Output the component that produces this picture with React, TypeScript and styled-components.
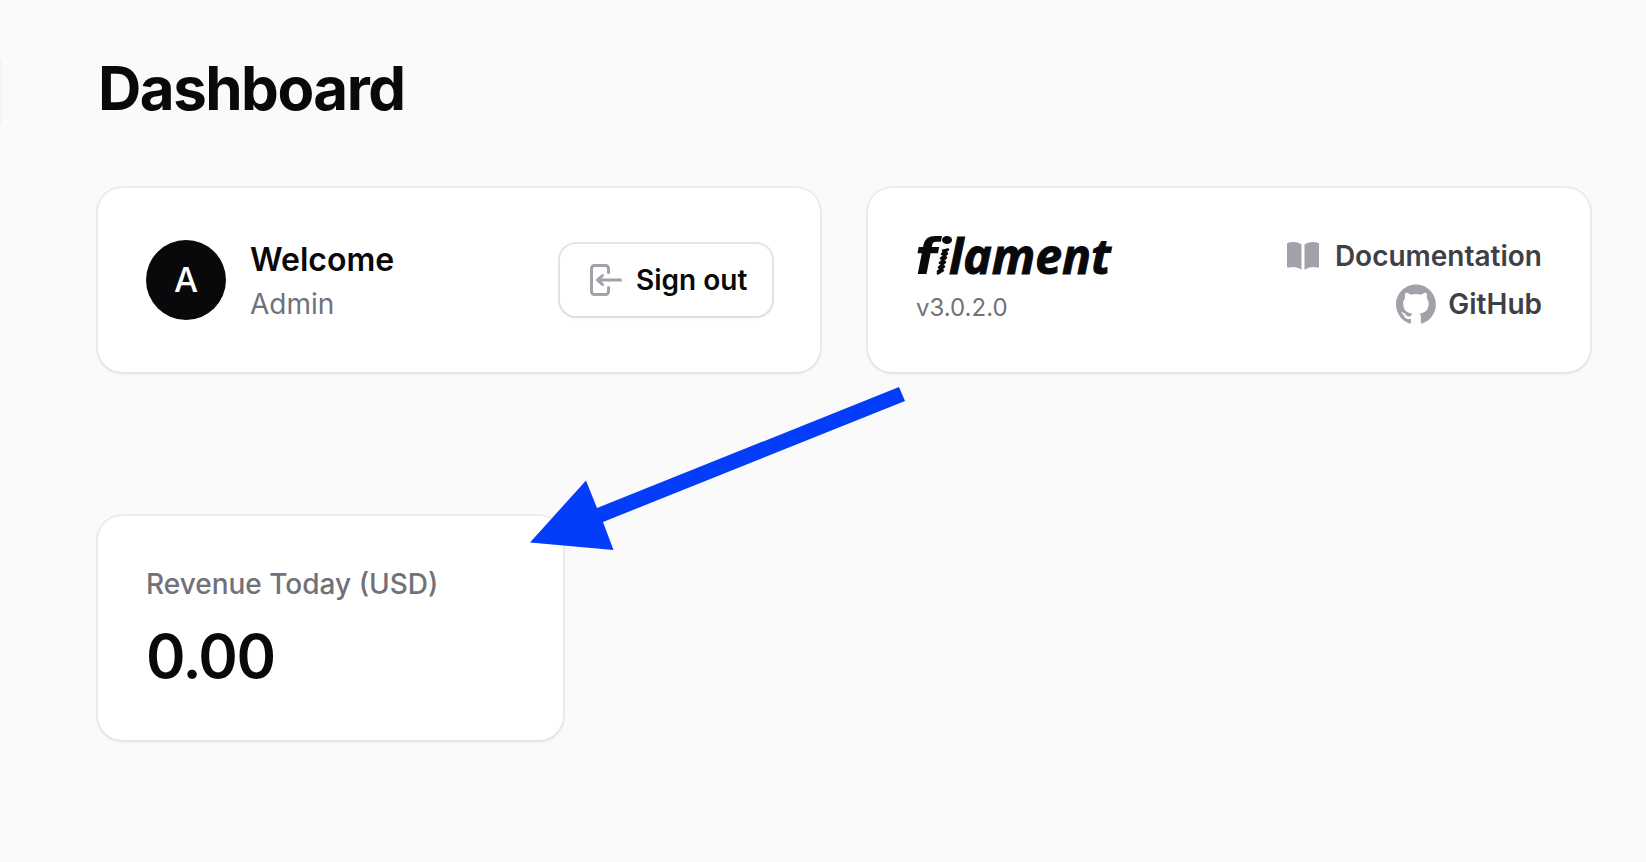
import React from "react";
import styled, { createGlobalStyle } from "styled-components";
import { HiMiniBookOpen } from "react-icons/hi2";

const GlobalStyle = createGlobalStyle`
  *, *::before, *::after { box-sizing: border-box; }
  body {
    margin: 0;
    background: #fafafa;
    color: #09090b;
    font-family: Inter, "Liberation Sans", sans-serif;
    -webkit-font-smoothing: antialiased;
  }
  h1, h2, p { margin: 0; }
`;

const Layout = styled.div`
  display: flex;
  align-items: flex-start;
  min-height: 100vh;
`;

const SidebarEdge = styled.aside`
  flex: none;
  width: 2px;
  height: 64px;
  margin-top: 60px;
  border-radius: 0 2px 2px 0;
  background: #f4f4f5;
`;

const Main = styled.main`
  flex: 1;
  min-width: 0;
  padding: 52px 56px 120px 96px;
`;

const Title = styled.h1`
  font-size: 60px;
  line-height: 72px;
  font-weight: 700;
  letter-spacing: -0.025em;
`;

const WidgetGrid = styled.div<{ $columns: number; $top: number }>`
  display: grid;
  grid-template-columns: repeat(${(p) => p.$columns}, minmax(0, 1fr));
  gap: 48px;
  margin-top: ${(p) => p.$top}px;
`;

const Card = styled.section`
  display: flex;
  align-items: center;
  padding: 48px;
  border-radius: 24px;
  background: #fff;
  box-shadow: 0 0 0 2px rgba(9, 9, 11, 0.05), 0 2px 4px rgba(0, 0, 0, 0.05);
`;

const Avatar = styled.div`
  display: grid;
  place-items: center;
  flex: none;
  width: 80px;
  height: 80px;
  margin-right: 24px;
  border-radius: 50%;
  background: #09090b;
  color: #fff;
  font-size: 34px;
  font-weight: 500;
  line-height: 40px;
`;

const Grow = styled.div`
  flex: 1;
  min-width: 0;
`;

const Greeting = styled.h2`
  font-size: 32px;
  line-height: 48px;
  font-weight: 600;
`;

const UserName = styled.p`
  font-size: 28px;
  line-height: 40px;
  color: #71717a;
`;

const SignOutButton = styled.button`
  display: inline-flex;
  align-items: center;
  gap: 12px;
  min-width: 212px;
  padding: 16px 24px;
  border: 0;
  border-radius: 16px;
  background: #fff;
  color: #09090b;
  font: 600 28px/40px Inter, "Liberation Sans", sans-serif;
  box-shadow: 0 0 0 2px rgba(9, 9, 11, 0.1), 0 2px 4px rgba(0, 0, 0, 0.05);
  cursor: pointer;

  svg { flex: none; color: #a1a1aa; }
`;

const BrandLink = styled.a`
  display: block;
  height: 40px;
  color: inherit;

  svg { display: block; overflow: visible; }
`;

const Version = styled.p`
  margin-top: 16px;
  font-size: 24px;
  line-height: 32px;
  color: #71717a;
`;

const Links = styled.nav`
  display: flex;
  flex-direction: column;
  align-items: flex-end;
  gap: 8px;
`;

const ResourceLink = styled.a`
  display: inline-flex;
  align-items: center;
  gap: 12px;
  color: #3f3f46;
  font-size: 28px;
  line-height: 40px;
  font-weight: 600;
  text-decoration: none;

  svg { color: #a1a1aa; }
`;

const Stat = styled.div`
  display: grid;
  gap: 16px;
`;

const StatLabel = styled.p`
  font-size: 28px;
  line-height: 40px;
  font-weight: 500;
  color: #71717a;
`;

const StatValue = styled.p`
  font-size: 60px;
  line-height: 72px;
  font-weight: 600;
  letter-spacing: -0.025em;
`;

const Arrow = styled.svg`
  position: absolute;
  left: 530px;
  top: 387px;
  pointer-events: none;
`;

const FilamentLogo = () => (
  <svg width="200" height="40" viewBox="0 0 200 40" fill="currentColor" role="img" aria-label="filament">
    <g fontStyle="italic" fontWeight="700">
      <text x="-1" y="38" fontSize="50" fontFamily="'DejaVu Sans', sans-serif">f</text>
      <text x="33" y="38" fontSize="48" fontFamily="'Open Sans', 'Noto Sans', sans-serif" stroke="currentColor" strokeWidth="1">lament</text>
    </g>
    <ellipse cx="31" cy="4" rx="5" ry="4" />
    <path
      d="M26 15L32 13.500L26 18L31 17.500L25 22.500L30 21.500L24 27L29 26L23 31.500L28 30.500L22 35.500L27 34.500L21 38"
      fill="none"
      stroke="currentColor"
      strokeWidth="2.500"
      strokeLinejoin="round"
    />
  </svg>
);

const SignOutIcon = () => (
  <svg width="40" height="40" viewBox="0 0 20 20" fill="currentColor" aria-hidden="true">
    <path
      fillRule="evenodd"
      clipRule="evenodd"
      d="M3 4.25A2.25 2.25 0 0 1 5.25 2h5.5A2.25 2.25 0 0 1 13 4.25v2a.75.75 0 0 1-1.500 0v-2a.75.75 0 0 0-.75-.75h-5.500a.75.75 0 0 0-.75.75v11.500c0 .414.336.75.75.75h5.500a.75.75 0 0 0 .75-.75v-2a.75.75 0 0 1 1.500 0v2A2.25 2.25 0 0 1 10.750 18h-5.500A2.25 2.25 0 0 1 3 15.750V4.250z"
    />
    <path
      fillRule="evenodd"
      clipRule="evenodd"
      d="M19 10a.75.75 0 0 0-.75-.75H8.704l1.048-.943a.75.75 0 1 0-1.004-1.114l-2.500 2.250a.75.75 0 0 0 0 1.114l2.500 2.250a.75.75 0 1 0 1.004-1.114l-1.048-.943h9.546A.75.75 0 0 0 19 10z"
    />
  </svg>
);

const GitHubMark = () => (
  <svg width="40" height="40" viewBox="0 0 98 96" fill="currentColor" aria-hidden="true">
    <path
      fillRule="evenodd"
      clipRule="evenodd"
      d="M48.854 0C21.839 0 0 22 0 49.217c0 21.756 13.993 40.172 33.405 46.69 2.427.49 3.316-1.059 3.316-2.362 0-1.141-.08-5.052-.08-9.127-13.59 2.934-16.42-5.867-16.42-5.867-2.184-5.704-5.42-7.17-5.42-7.17-4.448-3.015.324-3.015.324-3.015 4.934.326 7.523 5.052 7.523 5.052 4.367 7.496 11.404 5.378 14.235 4.074.404-3.178 1.699-5.378 3.074-6.6-10.839-1.141-22.243-5.378-22.243-24.283 0-5.378 1.94-9.778 5.014-13.2-.485-1.222-2.184-6.275.486-13.038 0 0 4.125-1.304 13.426 5.052a46.97 46.97 0 0 1 12.214-1.63c4.125 0 8.33.571 12.213 1.63 9.302-6.356 13.427-5.052 13.427-5.052 2.67 6.763.97 11.816.485 13.038 3.155 3.422 5.015 7.822 5.015 13.2 0 18.905-11.404 23.06-22.324 24.283 1.78 1.548 3.316 4.481 3.316 9.126 0 6.6-.08 11.897-.08 13.526 0 1.304.89 2.853 3.316 2.364 19.412-6.52 33.405-24.935 33.405-46.691C97.707 22 75.788 0 48.854 0z"
    />
  </svg>
);

export default function App() {
  return (
    <>
      <GlobalStyle />
      <Layout>
        <SidebarEdge />
        <Main>
          <Title>Dashboard</Title>
          <WidgetGrid $columns={2} $top={64}>
            <Card>
              <Avatar>A</Avatar>
              <Grow>
                <Greeting>Welcome</Greeting>
                <UserName>Admin</UserName>
              </Grow>
              <SignOutButton type="button">
                <SignOutIcon />
                Sign out
              </SignOutButton>
            </Card>
            <Card>
              <Grow>
                <BrandLink href="#filament">
                  <FilamentLogo />
                </BrandLink>
                <Version>v3.0.2.0</Version>
              </Grow>
              <Links>
                <ResourceLink href="#documentation">
                  <HiMiniBookOpen size={40} aria-hidden="true" />
                  Documentation
                </ResourceLink>
                <ResourceLink href="#github">
                  <GitHubMark />
                  GitHub
                </ResourceLink>
              </Links>
            </Card>
          </WidgetGrid>
          <WidgetGrid $columns={3} $top={144}>
            <Card>
              <Stat>
                <StatLabel>Revenue Today (USD)</StatLabel>
                <StatValue>0.00</StatValue>
              </Stat>
            </Card>
          </WidgetGrid>
        </Main>
      </Layout>
      <Arrow width="376" height="164" viewBox="0 0 376 164" fill="#033dfa" aria-hidden="true">
        <path d="M0 155.5L56 93.5L67 121L369 0L375 14L73 135L83.500 163Z" />
      </Arrow>
    </>
  );
}
